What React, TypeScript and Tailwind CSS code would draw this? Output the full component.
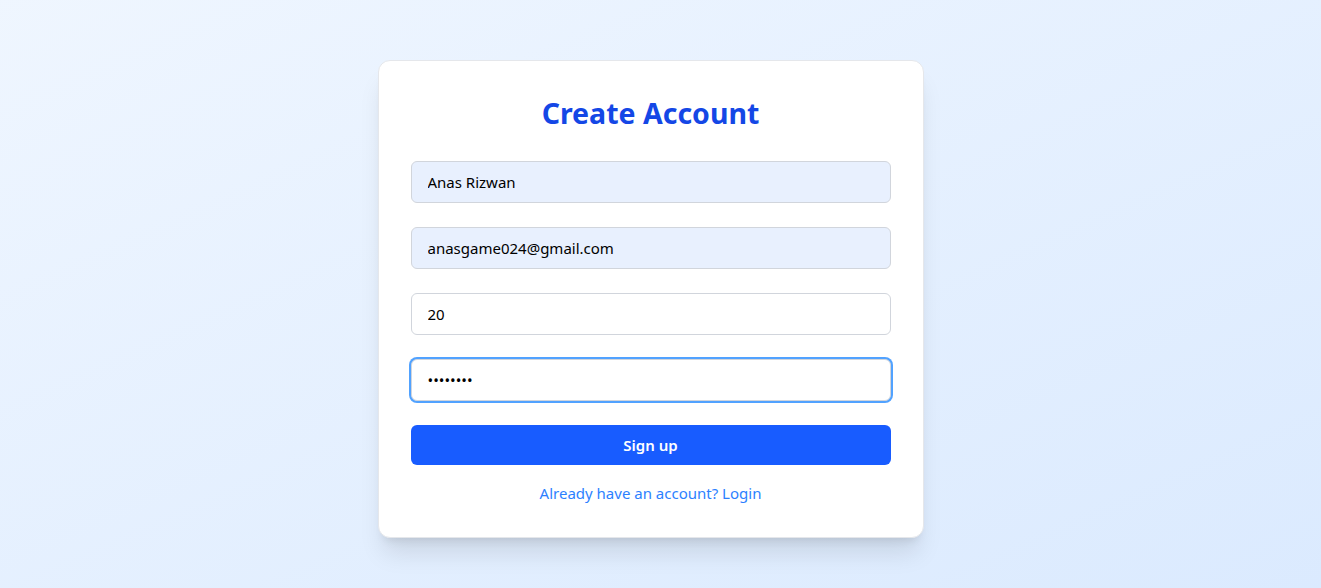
import React from 'react'

const inputBase =
  'w-full px-4 py-2 text-[15px] leading-6 text-black rounded-md border border-gray-300 outline-none'

const App = () => {
  return (
    <div
      className='min-h-screen w-full flex justify-center pt-[60px] pr-[20px] bg-gradient-to-br from-blue-50 to-blue-100'
      style={{ fontFamily: '"Noto Sans", "Open Sans", sans-serif' }}
    >
      <div className='w-[546px] h-fit bg-white rounded-xl border border-gray-200 shadow-xl p-8'>
        <h1 className='text-[28.5px] leading-9 font-bold text-blue-700 text-center mt-[2px] mb-[30px]'>
          Create Account
        </h1>

        <form className='flex flex-col gap-6' onSubmit={(e) => e.preventDefault()}>
          <input type='text' defaultValue='Anas Rizwan' className={`${inputBase} bg-[#e8f0fe]`} />
          <input type='email' defaultValue='anasgame024@gmail.com' className={`${inputBase} bg-[#e8f0fe]`} />
          <input type='number' defaultValue='20' className={`${inputBase} bg-white`} />
          <input
            type='password'
            defaultValue='12345678'
            autoFocus
            className={`${inputBase} bg-white ring-2 ring-blue-400 border-blue-400 caret-black`}
          />
          <button
            type='submit'
            className='w-full py-2 rounded-md bg-[#185cff] text-white font-semibold text-[15px] leading-6'
          >
            Sign up
          </button>
        </form>

        <p className='mt-4 text-center text-[15px] leading-6 text-blue-500'>
          <a href='#'>Already have an account? Login</a>
        </p>
      </div>
    </div>
  )
}

export default App
